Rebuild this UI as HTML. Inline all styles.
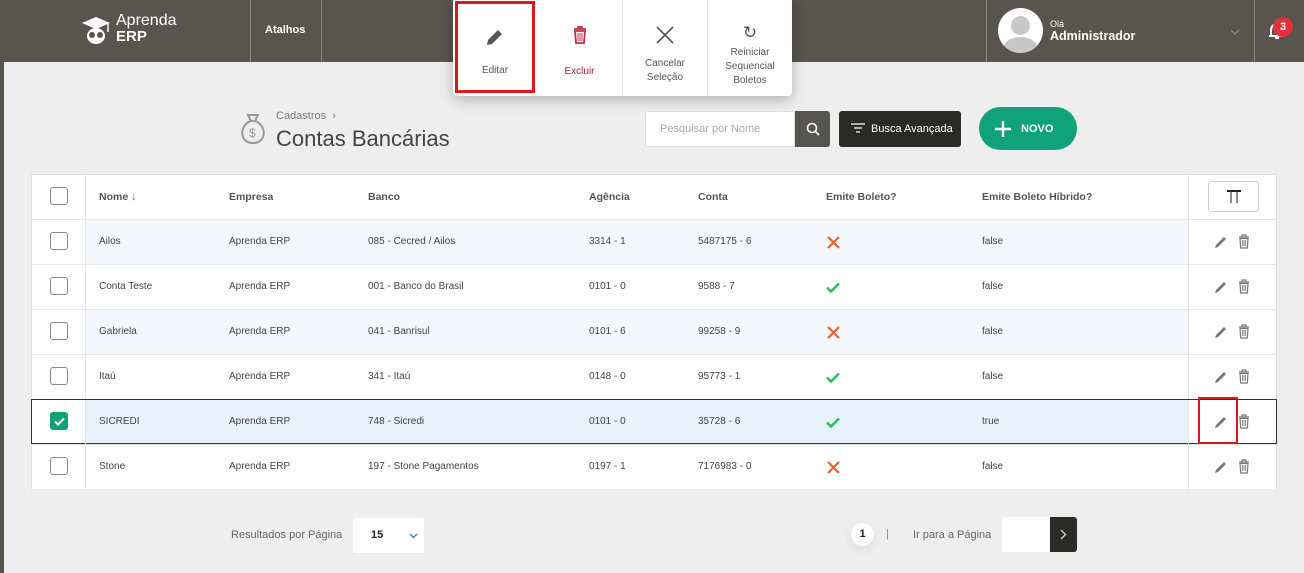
<!DOCTYPE html>
<html><head><meta charset="utf-8"><style>
*{box-sizing:border-box;margin:0;padding:0}
body{width:1304px;height:573px;overflow:hidden;background:#eeeeee;font-family:"Liberation Sans",sans-serif;position:relative;color:#444}
.hdr{position:absolute;left:0;top:0;width:1304px;height:62px;background:#57554d}
.vl{position:absolute;top:0;height:62px;width:1px;background:#8a887f}
.abs{position:absolute}
.menu{position:absolute;left:453px;top:0;width:339px;height:96px;background:#fff;box-shadow:0 4px 14px rgba(0,0,0,.25);border-radius:0 0 4px 4px}
.mi{position:absolute;top:0;height:96px;text-align:center;font-size:10px;color:#555;line-height:14px}
.tbl{position:absolute;left:31px;top:174px;width:1246px;height:315px;background:#fff;border:1px solid #dde0e4}
.row{position:absolute;left:0;width:1244px;height:45px;border-top:1px solid #e3e5e8;font-size:10px;color:#444}
.row span{position:absolute;top:16px}
.cb{position:absolute;left:18px;top:12px;width:18px;height:18px;border:1px solid #888;border-radius:3px;background:#fff}
.th span{font-weight:bold;color:#555;font-size:10.5px}
</style></head><body>
<div class="hdr"></div>
<div class="abs" style="left:0;top:62px;width:4px;height:511px;background:#57554d"></div>
<div class="vl" style="left:250px"></div><div class="vl" style="left:321px"></div><div class="vl" style="left:986px"></div><div class="vl" style="left:1254px"></div>
<svg class="abs" style="left:80px;top:14px" width="34" height="32" viewBox="0 0 34 32"><path d="M2 9 L16 3 L30 9 L16 15Z" fill="#fff"/><path d="M28 9v9" stroke="#fff" stroke-width="1.5"/><ellipse cx="16" cy="22" rx="9" ry="8" fill="#fff"/><circle cx="12" cy="21" r="3" fill="#57554d"/><circle cx="20" cy="21" r="3" fill="#57554d"/></svg>
<div class="abs" style="left:116px;top:13px;color:#fff;font-size:16px;line-height:16px">Aprenda<br><b style="font-size:15px">ERP</b></div>
<div class="abs" style="left:265px;top:24px;color:#fff;font-size:11px;font-weight:bold">Atalhos</div>
<div class="abs" style="left:998px;top:8px;width:45px;height:45px;border-radius:50%;background:#fff;overflow:hidden"><div class="abs" style="left:13px;top:8px;width:19px;height:19px;border-radius:50%;background:#c8c8c8"></div><div class="abs" style="left:5px;top:29px;width:35px;height:24px;border-radius:50%;background:#c8c8c8"></div></div>
<div class="abs" style="left:1050px;top:19px;color:#fff;font-size:9px;line-height:10px">Olá<br><b style="font-size:12.5px;line-height:14px">Administrador</b></div>
<svg class="abs" style="left:1230px;top:29px" width="10" height="6" viewBox="0 0 10 6"><path d="M1 1l4 4 4-4" fill="none" stroke="#9a988f"/></svg>
<svg class="abs" style="left:1268px;top:22px" width="18" height="18" viewBox="0 0 18 18"><path d="M3 14V8a6 6 0 0 1 12 0v6Z M1 14h16" fill="none" stroke="#fff" stroke-width="2"/><path d="M7 16h4" stroke="#fff" stroke-width="2"/></svg>
<div class="abs" style="left:1273px;top:17px;width:20px;height:20px;border-radius:50%;background:#e0323c;color:#fff;font-size:11px;font-weight:bold;text-align:center;line-height:20px">3</div>

<div class="menu">
 <div class="mi" style="left:2px;width:80px;height:92px;border:3px solid #d71920;top:1px">
  <svg style="margin-top:23px" width="20" height="20" viewBox="0 0 20 20"><path d="M2 18 L3 13 L13 3 L17 7 L7 17Z" fill="#555"/></svg>
  <div style="margin-top:12px">Editar</div></div>
 <div class="mi" style="left:84px;width:85px;color:#a3243b"><svg style="margin-top:26px" width="16" height="18" viewBox="0 0 16 18"><path d="M2 3h12M6 3V1h4v2M3 5h10l-1 12H4Z" fill="none" stroke="#c0304a" stroke-width="1.8"/><path d="M6 7v8M8 7v8M10 7v8" stroke="#c0304a"/></svg><div style="margin-top:16px">Excluir</div></div>
 <div class="mi" style="left:169px;width:85px;border-left:1px solid #e8e8e8"><svg style="margin-top:25px" width="20" height="20" viewBox="0 0 20 20"><path d="M2 2L18 18M18 2L2 18" stroke="#555" stroke-width="1.6"/></svg><div style="margin-top:7px">Cancelar<br>Seleção</div></div>
 <div class="mi" style="left:254px;width:85px;border-left:1px solid #e8e8e8"><div style="font-size:17px;margin-top:24px;line-height:18px">↻</div><div style="margin-top:4px">Reiniciar<br>Sequencial<br>Boletos</div></div>
</div>

<svg class="abs" style="left:236px;top:112px" width="34" height="34" viewBox="0 0 34 34"><path d="M12 3h10l-3 6h-4Z M15 9 C3 13 3 31 17 31 C31 31 31 13 19 9Z" fill="none" stroke="#999" stroke-width="2"/><text x="13" y="25" font-size="12" fill="#999" font-family="Liberation Sans">$</text></svg>
<div class="abs" style="left:276px;top:110px;font-size:11px;color:#777">Cadastros &nbsp;›</div>
<div class="abs" style="left:276px;top:126px;font-size:22px;color:#444;font-weight:300">Contas Bancárias</div>
<div class="abs" style="left:645px;top:111px;width:150px;height:36px;background:#fff;border:1px solid #ddd;border-radius:3px 0 0 3px;font-size:11px;color:#aaa;padding:11px 14px">Pesquisar por Nome</div>
<div class="abs" style="left:795px;top:111px;width:35px;height:36px;background:#55544f;border-radius:0 3px 3px 0"><svg style="margin:11px" width="14" height="14" viewBox="0 0 14 14"><circle cx="6" cy="6" r="4.5" fill="none" stroke="#fff" stroke-width="1.6"/><path d="M9.5 9.5L13 13" stroke="#fff" stroke-width="1.6"/></svg></div>
<div class="abs" style="left:839px;top:111px;width:122px;height:36px;background:#2a2a26;border-radius:3px;color:#fff;font-size:11px;padding:12px 0 0 32px">Busca Avançada<svg class="abs" style="left:12px;top:12px" width="14" height="11" viewBox="0 0 14 11"><path d="M0 1h14M3 5h8M5 9h4" stroke="#fff" stroke-width="1.3"/></svg></div>
<div class="abs" style="left:979px;top:107px;width:98px;height:43px;background:#10a37a;border-radius:22px;color:#fff;font-weight:bold;font-size:11px;padding-top:16px;padding-left:42px">NOVO<svg class="abs" style="left:16px;top:14px" width="16" height="16" viewBox="0 0 16 16"><path d="M8 0v16M0 8h16" stroke="#fff" stroke-width="2.4"/></svg></div>

<div class="tbl">
 <div class="abs" style="left:53px;top:0;width:1px;height:313px;background:#e3e5e8"></div>
 <div class="abs" style="left:1156px;top:0;width:1px;height:313px;background:#e3e5e8"></div>
 <div class="row th" style="top:0;border-top:none"><div class="cb"></div><span style="left:67px">Nome ↓</span><span style="left:197px">Empresa</span><span style="left:336px">Banco</span><span style="left:557px">Agência</span><span style="left:666px">Conta</span><span style="left:794px">Emite Boleto?</span><span style="left:950px">Emite Boleto Híbrido?</span>
 <div class="abs" style="left:1176px;top:6px;width:51px;height:31px;border:1px solid #ccd;border-radius:3px"><svg class="abs" style="left:18px;top:8px" width="14" height="13" viewBox="0 0 14 13"><path d="M0 1h14" stroke="#222" stroke-width="2"/><path d="M4 1v12M10 1v12" stroke="#444" stroke-width="1.2"/></svg></div></div>
</div>
<div id="rows"></div>
<script>
const d=[["Ailos","085 - Cecred / Ailos","3314 - 1","5487175 - 6",0,"false"],["Conta Teste","001 - Banco do Brasil","0101 - 0","9588 - 7",1,"false"],["Gabriela","041 - Banrisul","0101 - 6","99258 - 9",0,"false"],["Itaú","341 - Itaú","0148 - 0","95773 - 1",1,"false"],["SICREDI","748 - Sicredi","0101 - 0","35728 - 6",1,"true"],["Stone","197 - Stone Pagamentos","0197 - 1","7176983 - 0",0,"false"]];
const X='<svg class="abs" style="left:795px;top:16px" width="13" height="13" viewBox="0 0 13 13"><path d="M1 1L12 12M12 1L1 12" stroke="#e8632e" stroke-width="2.2"/></svg>';
const OK='<svg class="abs" style="left:794px;top:17px" width="14" height="11" viewBox="0 0 14 11"><path d="M1 5.5L5 9.5L13 1.5" fill="none" stroke="#2cbf5a" stroke-width="2.6"/></svg>';
let h="";d.forEach((r,i)=>{const sel=i==4;const bg=sel?"#e8f2fd":(i%2==0?"#f4f7fb":"#fff");
h+=`<div class="row" style="left:32px;top:${219+45*i}px;width:1244px;background:linear-gradient(to right,#fff 53px,${bg} 53px,${bg} 1156px,#fff 1156px);${sel?"border:1px solid #333;left:31px;width:1246px;":""}">
<div class="abs" style="left:53px;top:0;width:1px;height:45px;background:#e3e5e8"></div><div class="abs" style="left:1156px;top:0;width:1px;height:45px;background:#e3e5e8"></div>
${sel?'<div class="cb" style="background:#10a37a;border-color:#10a37a"><svg class="abs" style="left:3px;top:4px" width="11" height="9" viewBox="0 0 11 9"><path d="M1 4.5L4 7.5L10 1.5" fill="none" stroke="#fff" stroke-width="2"/></svg></div>':'<div class="cb"></div>'}
<span style="left:67px">${r[0]}</span><span style="left:197px">Aprenda ERP</span><span style="left:336px">${r[1]}</span><span style="left:557px">${r[2]}</span><span style="left:666px">${r[3]}</span>
${r[4]?OK:X}<span style="left:950px">${r[5]}</span>
<svg class="abs" style="left:1182px;top:15px" width="14" height="14" viewBox="0 0 14 14"><path d="M1 13 L2 10 L10 2 L12 4 L4 12Z" fill="#777"/></svg>
<svg class="abs" style="left:1206px;top:14px" width="12" height="15" viewBox="0 0 12 15"><path d="M1 3h10M4 3V1h4v2M2 4.5h8l-.7 9.5H2.7Z" fill="none" stroke="#777" stroke-width="1.2"/><path d="M4.5 6v6M6 6v6M7.5 6v6" stroke="#777" stroke-width=".8"/></svg>
${sel?'<div class="abs" style="left:1166px;top:-3px;width:40px;height:47px;border:2px solid #d71920"></div>':''}</div>`});
document.getElementById("rows").innerHTML=h;
</script>
<div class="abs" style="left:231px;top:529px;font-size:11px;color:#666">Resultados por Página</div>
<div class="abs" style="left:353px;top:518px;width:71px;height:35px;background:#fff;border-radius:2px;font-size:11px;font-weight:bold;color:#222;padding:11px 0 0 18px">15<svg class="abs" style="left:56px;top:15px" width="9" height="6" viewBox="0 0 9 6"><path d="M1 1l3.5 3.5L8 1" fill="none" stroke="#3b82d6" stroke-width="1.5"/></svg></div>
<div class="abs" style="left:851px;top:523px;width:23px;height:23px;border-radius:50%;background:#fff;font-size:11px;font-weight:bold;color:#222;text-align:center;line-height:23px;box-shadow:0 4px 10px rgba(0,0,0,.08)">1</div>
<div class="abs" style="left:886px;top:528px;font-size:11px;color:#888">|</div>
<div class="abs" style="left:913px;top:529px;font-size:11px;color:#666">Ir para a Página</div>
<div class="abs" style="left:1002px;top:517px;width:50px;height:35px;background:#fff;border-radius:2px 0 0 2px"></div>
<div class="abs" style="left:1050px;top:517px;width:27px;height:35px;background:#2a2a26;border-radius:0 3px 3px 0"><svg class="abs" style="left:10px;top:12px" width="7" height="11" viewBox="0 0 7 11"><path d="M1 1l4.5 4.5L1 10" fill="none" stroke="#ccc" stroke-width="1.4"/></svg></div>
</body></html>
